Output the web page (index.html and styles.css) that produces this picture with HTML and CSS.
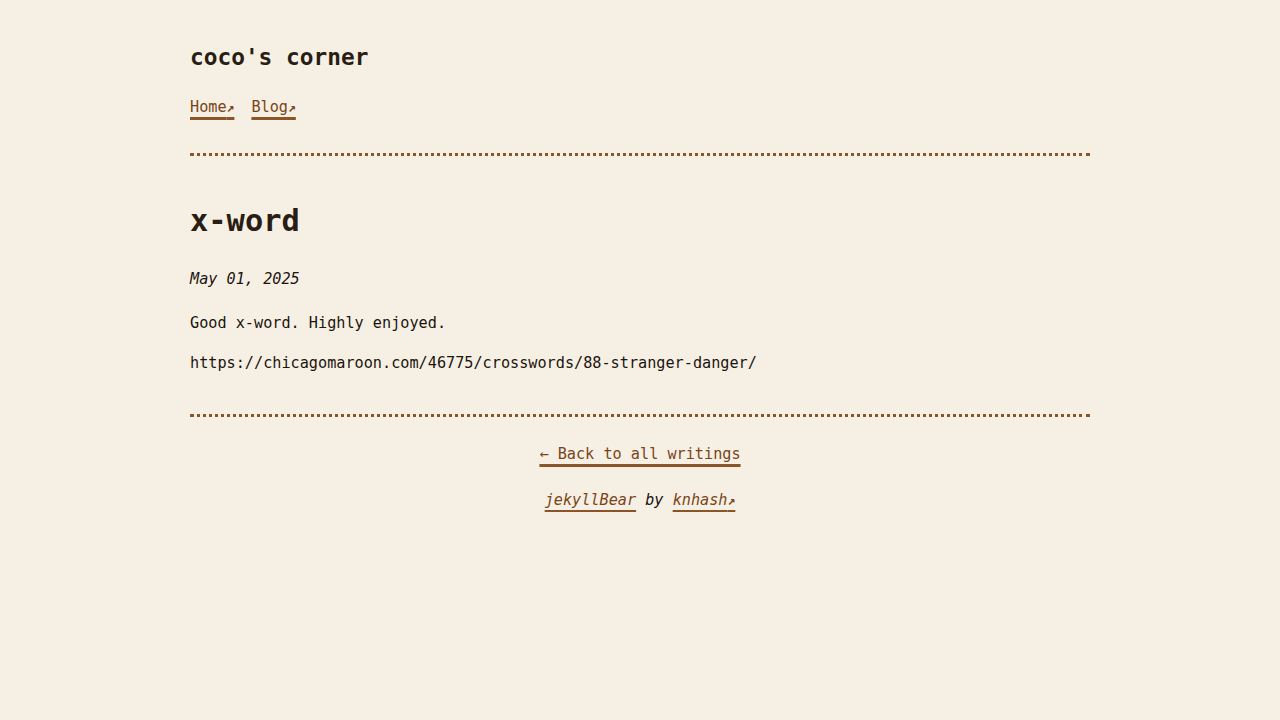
FILE: index.html
```html
<!DOCTYPE html>
<html lang="en">
<head>
<meta charset="utf-8">
<title>x-word | coco's corner</title>
<link rel="stylesheet" href="styles.css">
</head>
<body>
<div class="page">
  <header class="site-header">
    <a class="site-title" href="#">coco's corner</a>
    <nav class="site-nav">
      <a class="nav-link" href="#">Home<span class="ext">↗</span></a>
      <a class="nav-link" href="#">Blog<span class="ext">↗</span></a>
    </nav>
  </header>
  <main class="post">
    <h1 class="post-title">x-word</h1>
    <p class="post-date"><i>May 01, 2025</i></p>
    <p class="post-text">Good x-word. Highly enjoyed.</p>
    <p class="post-text">https://chicagomaroon.com/46775/crosswords/88-stranger-danger/</p>
  </main>
  <footer class="site-footer">
    <p class="back"><a class="link" href="#">← Back to all writings</a></p>
    <p class="credit"><a class="link" href="#">jekyllBear</a> by <a class="link" href="#">knhash<span class="ext">↗</span></a></p>
  </footer>
</div>
</body>
</html>
```

FILE: styles.css
```css
html, body {
  margin: 0;
  padding: 0;
  background: #f6f0e4;
}
body {
  font-family: "DejaVu Sans Mono", "Liberation Mono", monospace;
  font-size: 15.2px;
  color: #1c140e;
  line-height: 1.5;
}
.page {
  width: 900px;
  margin: 0 auto;
  padding-top: 40px;
}
.site-header {
  display: flex;
  flex-direction: column;
  gap: 23px;
  padding-bottom: 35px;
  border-bottom: 3px dotted #8c5429;
}
.site-title {
  font-size: 22.8px;
  font-weight: bold;
  color: #2a1d14;
  text-decoration: none;
  line-height: 34px;
}
.site-nav {
  display: flex;
  gap: 17px;
  line-height: 20px;
}
.nav-link, .link {
  color: #7a4418;
  text-decoration: underline;
  text-decoration-color: #8c5429;
  text-decoration-thickness: 3px;
  text-underline-offset: 5px;
  text-decoration-skip-ink: none;
}
.ext {
  font-size: 13px;
  font-weight: bold;
}
.post {
  padding-top: 45px;
  padding-bottom: 40px;
  border-bottom: 3px dotted #8c5429;
}
.post-title {
  font-size: 30.4px;
  font-weight: bold;
  color: #2a1d14;
  margin: 0 0 27px;
  line-height: 40px;
}
.post-date {
  margin: 0 0 22px;
  line-height: 22px;
}
.post-text {
  margin: 0 0 18px;
  line-height: 22px;
}
.post-text:last-child {
  margin-bottom: 0;
}
.site-footer {
  text-align: center;
  padding-top: 26px;
}
.back {
  margin: 0 0 24px;
  line-height: 22px;
}
.credit {
  margin: 0;
  font-style: italic;
  line-height: 22px;
}
```
